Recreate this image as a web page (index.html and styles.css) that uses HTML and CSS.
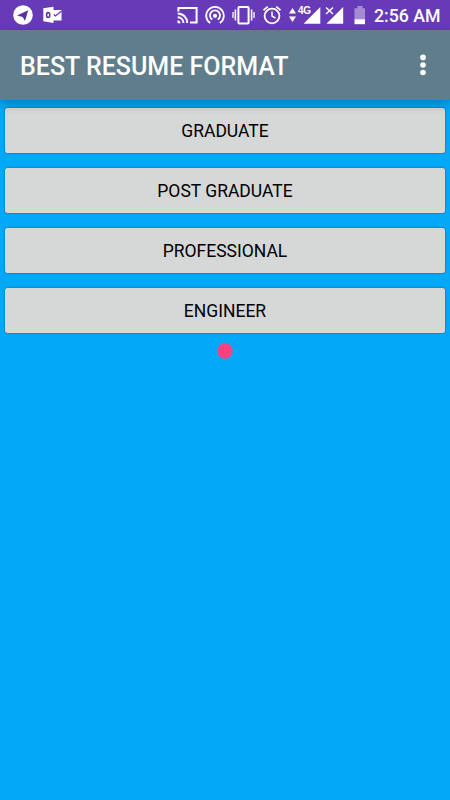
FILE: index.html
```
<!DOCTYPE html>
<html lang="en">
<head>
<meta charset="utf-8">
<title>Best Resume Format</title>
<link rel="stylesheet" href="styles.css">
</head>
<body>
<div class="status">
  <div class="notifications">
    <svg width="20" height="30" viewBox="0 0 20 30"><circle cx="10" cy="15" r="9.8" fill="#fff"/><path d="M4 15.5 15.2 10.2 12 21 9.7 16.9Z" fill="#5630a5"/></svg>
    <svg width="19" height="30" viewBox="0 0 19 30"><path d="M10 10h8.5v10.5H10z" fill="#fff"/><path d="M10.5 14.2 12.5 16 18.5 11" fill="none" stroke="#673ab7" stroke-width="1.3"/><path d="M.3 8.2 10.5 6.8V23L.3 21.3Z" fill="#fff"/><ellipse cx="5.2" cy="15" rx="1.6" ry="2.5" fill="none" stroke="#5630a5" stroke-width="1.5"/></svg>
  </div>
  <div class="system">
    <svg width="22" height="30" viewBox="0 0 22 30" fill="none" stroke="#fff" stroke-width="2"><path d="M1.4 11.5V8h18.2v14.6H13"/><path d="M.7 13.4c5.3 0 9.6 4.3 9.6 9.6M.7 17.2c3.2 0 5.8 2.6 5.8 5.8"/><path d="M.5 20.3c1.7 0 3 1.2 3 3h-3z" fill="#fff" stroke="none"/></svg>
    <svg class="hotspot" width="20" height="30" viewBox="0 0 20 30" fill="none" stroke="#fff" stroke-width="1.8"><path d="M5.2 23A8.8 8.8 0 1 1 14.8 23"/><path d="M7.3 19.6A5 5 0 1 1 12.7 19.6"/><circle cx="10" cy="15.8" r="2.1" fill="#fff" stroke="none"/></svg>
    <svg class="vibrate" width="23" height="30" viewBox="0 0 23 30" fill="none" stroke="#fff"><rect x="6.4" y="7" width="10.2" height="16.4" rx="1" stroke-width="2"/><path d="M3.4 9.5v11M19.6 9.5v11" stroke-width="1.6"/><path d="M1 12v6M22 12v6" stroke-width="1.3"/></svg>
    <svg class="alarm" width="20" height="30" viewBox="0 0 20 30" fill="none" stroke="#fff" stroke-width="1.8"><circle cx="10" cy="16" r="7.4"/><path d="M10 11.5V16l3.5 2.2" stroke-width="1.5"/><path d="M1.5 10.2 5.8 6.6M18.5 10.2 14.2 6.6"/></svg>
    <svg class="signal-data" width="32" height="30" viewBox="0 0 32 30" fill="#fff"><path d="M0 13.6 3.5 8 7 13.6ZM0 16.4 3.5 22 7 16.4ZM31.3 7v16.8H14.5Z"/><text x="9" y="14" class="network">4G</text></svg>
    <svg class="signal-none" width="19" height="30" viewBox="0 0 19 30"><path d="M18.2 7v16.8H1.4Z" fill="#fff"/><path d="M1 7.5 8 14M8 7.5 1 14" fill="none" stroke="#fff" stroke-width="1.5"/></svg>
    <svg class="battery" width="12" height="30" viewBox="0 0 12 30"><path d="M3.5 6h5v2.2H11V19.2H.5V8.2h3z" fill="#a68bd4"/><path d="M.5 19.2H11V24.2H.5z" fill="#fff"/></svg>
    <span class="clock">2:56 AM</span>
  </div>
</div>
<header class="toolbar">
  <h1>BEST RESUME FORMAT</h1>
  <svg width="6" height="22" viewBox="0 0 6 22" fill="#fff"><circle cx="3" cy="3.4" r="2.8"/><circle cx="3" cy="11" r="2.8"/><circle cx="3" cy="18.5" r="2.8"/></svg>
</header>
<main>
  <button>GRADUATE</button>
  <button>POST GRADUATE</button>
  <button>PROFESSIONAL</button>
  <button>ENGINEER</button>
  <svg class="dot" width="16" height="16" viewBox="0 0 16 16"><circle cx="8" cy="8" r="7.7" fill="#ff4081"/></svg>
</main>
</body>
</html>
```
FILE: styles.css
```
body {
  margin: 0;
  height: 800px;
  overflow: hidden;
  background: #03a9f7;
  font-family: Roboto, sans-serif;
}
svg { display: block; flex: none; }
.status {
  height: 30px;
  display: flex;
  justify-content: space-between;
  background: #673ab7;
  padding: 0 10px 0 12.5px;
}
.notifications, .system { display: flex; }
.notifications { gap: 10.5px; }
.hotspot { margin-left: 6px; }
.vibrate { margin-left: 7.5px; }
.alarm { margin-left: 7px; }
.signal-data { margin-left: 6.5px; }
.signal-none { margin-left: 4.5px; }
.battery { margin-left: 10px; }
.network { font: 700 10px "Liberation Sans", sans-serif; letter-spacing: -.4px; }
.clock {
  width: 66px;
  margin-left: 8px;
  color: #fff;
  font-size: 17.7px;
  font-weight: 500;
  line-height: 32px;
  white-space: nowrap;
}
.toolbar {
  position: relative;
  z-index: 1;
  height: 70px;
  box-sizing: border-box;
  padding: 0 24.5px 0 20px;
  display: flex;
  align-items: center;
  justify-content: space-between;
  background: #607d8b;
  box-shadow: 0 4px 10px rgba(0, 0, 0, .25);
}
h1 {
  margin: 4px 0 0;
  color: #fff;
  font-size: 25px;
  line-height: 30px;
  font-weight: 500;
  white-space: nowrap;
}
main {
  display: flex;
  flex-direction: column;
  gap: 15px;
  padding: 7.5px 5px;
}
button {
  height: 45px;
  padding: 1px 0 0;
  border: 0;
  border-radius: 2.5px;
  background: #d6d7d7;
  box-shadow: 0 0 2px rgba(0, 0, 0, .5);
  color: #000;
  font: 400 17.5px/44px Roboto, sans-serif;
}
.dot {
  margin-top: -4.5px;
  align-self: center;
}
```
